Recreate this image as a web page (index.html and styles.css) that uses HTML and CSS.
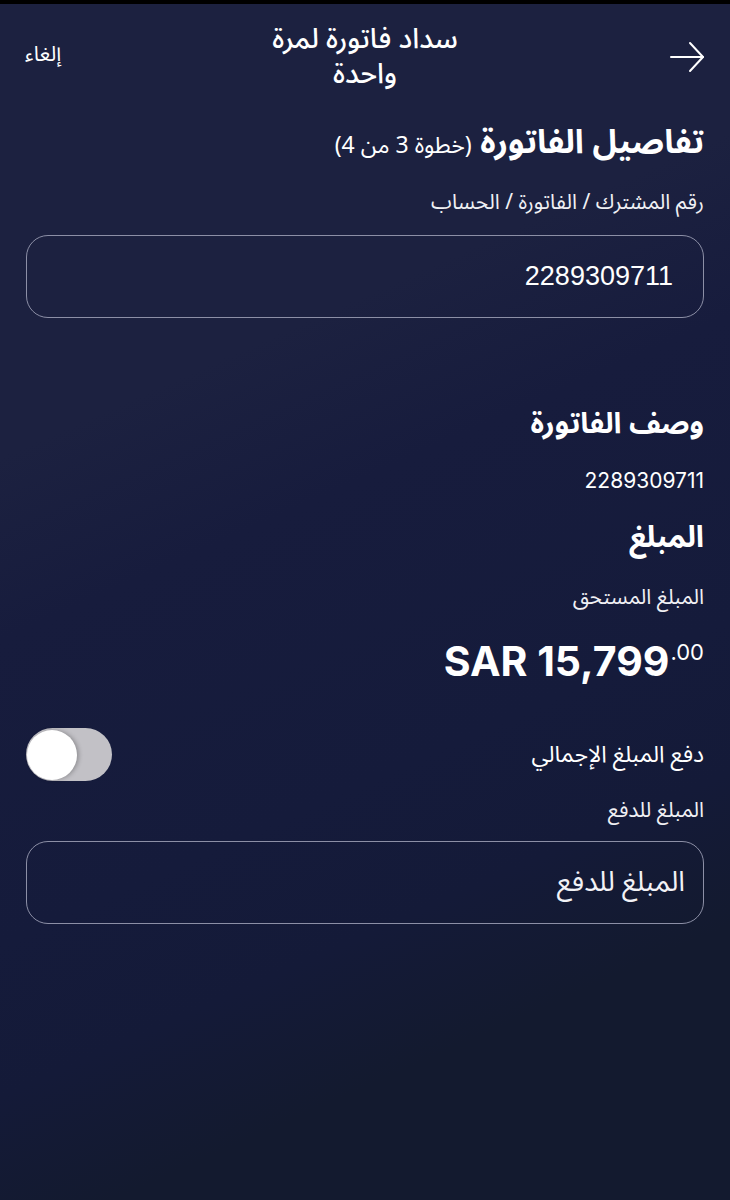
FILE: index.html
```html
<!DOCTYPE html>
<html lang="ar" dir="rtl">
<head>
  <meta charset="UTF-8">
  <meta name="viewport" content="width=device-width, initial-scale=1.0">
  <title>سداد فاتورة لمرة واحدة</title>
  <link rel="stylesheet" href="styles.css">
</head>
<body>
  <div class="status-strip"></div>
  <div class="header">
    <span class="back">
      <svg width="36" height="32" viewBox="0 0 36 32" fill="none" stroke="#fff" stroke-width="2" stroke-linecap="round" stroke-linejoin="round">
        <line x1="2" y1="16" x2="34" y2="16"/>
        <polyline points="21,2 34,16 21,30"/>
      </svg>
    </span>
    <h1 class="title">سداد فاتورة لمرة واحدة</h1>
    <span class="cancel">إلغاء</span>
  </div>
  <div class="content">
    <h2 class="step-title">تفاصيل الفاتورة <span class="step">(خطوة 3 من 4)</span></h2>
    <div class="label first-label">رقم المشترك / الفاتورة / الحساب</div>
    <div class="field"><span class="field-value">2289309711</span></div>

    <h2 class="section-title desc-title">وصف الفاتورة</h2>
    <div class="value">2289309711</div>

    <h2 class="section-title amount-title">المبلغ</h2>
    <div class="label due-label">المبلغ المستحق</div>
    <div class="amount"><span dir="ltr">SAR 15,799<sup>.00</sup></span></div>

    <div class="toggle-row">
      <span class="toggle-label">دفع المبلغ الإجمالي</span>
      <span class="toggle"><span class="knob"></span></span>
    </div>
    <div class="label pay-label">المبلغ للدفع</div>
    <div class="field pay-field"><span class="placeholder">المبلغ للدفع</span></div>
  </div>
</body>
</html>
```

FILE: styles.css
```css
html, body {
  margin: 0;
  padding: 0;
}
body {
  width: 730px;
  min-height: 1200px;
  color: #fff;
  font-family: 'Noto Sans Arabic', 'DejaVu Sans', 'Noto Sans', sans-serif;
  background-color: #161b3b;
  background-image: linear-gradient(156deg, #1c2140 0%, #1c2140 30%, #171c3d 42%, #151b3b 62%, #141a38 72%, #131a2f 82%, #131a2f 100%);
}
.status-strip {
  height: 4px;
  background-color: #000;
}
.header {
  display: flex;
  align-items: center;
  justify-content: space-between;
  padding: 18px 25px 0 25px;
}
.back {
  width: 80px;
  display: flex;
  justify-content: flex-start;
}
.back svg {
  display: block;
}
.title {
  margin: 0;
  width: 215px;
  text-align: center;
  font-size: 28px;
  font-weight: 500;
  line-height: 35px;
}
.cancel {
  width: 80px;
  text-align: left;
  font-size: 21px;
  margin-top: -6px;
}
.content {
  padding: 0 26px;
}
.step-title {
  margin: 29px 0 0;
  font-size: 33px;
  font-weight: 700;
  line-height: 44px;
}
.step {
  font-size: 23px;
  font-weight: 400;
}
.label {
  margin-top: 23px;
  font-size: 21px;
  line-height: 28px;
  color: #f0f0f4;
}
.first-label {
  margin-top: 20px;
}
.field {
  margin-top: 19px;
  height: 81px;
  border: 1.5px solid #8c8fa6;
  border-radius: 22px;
  display: flex;
  align-items: center;
  padding: 0 30px 0 20px;
}
.field-value {
  font-family: 'Liberation Sans', Arial, sans-serif;
  font-size: 27px;
  color: #fff;
}
.placeholder {
  font-size: 28px;
  color: #f2f2f6;
  margin-right: -12px;
}
.section-title {
  margin: 0;
  font-size: 29px;
  font-weight: 700;
  line-height: 40px;
}
.desc-title {
  margin-top: 86px;
}
.value {
  margin-top: 23px;
  font-family: Inter, 'Liberation Sans', sans-serif;
  font-size: 21px;
  line-height: 28px;
}
.amount-title {
  margin-top: 23px;
  font-size: 30px;
}
.due-label {
  margin-top: 25px;
}
.amount {
  margin-top: 26px;
  font-family: Inter, 'Liberation Sans', sans-serif;
  font-size: 41px;
  font-weight: 700;
  line-height: 48px;
}
.amount sup {
  font-size: 22px;
  font-weight: 400;
  vertical-align: 16px;
  line-height: 0;
  margin-left: 1px;
}
.toggle-row {
  margin-top: 43px;
  display: flex;
  align-items: center;
  justify-content: space-between;
}
.toggle-label {
  font-size: 23px;
}
.toggle {
  width: 86px;
  height: 53px;
  border-radius: 27px;
  background-color: #c2c1c6;
  display: flex;
  align-items: center;
  justify-content: flex-end;
  padding: 0 1px;
  box-sizing: border-box;
}
.knob {
  width: 50px;
  height: 50px;
  border-radius: 50%;
  background-color: #fff;
  box-shadow: 2px 0 4px rgba(0, 0, 0, 0.25);
}
.pay-label {
  margin-top: 15px;
}
.pay-field {
  margin-top: 17px;
}
```
